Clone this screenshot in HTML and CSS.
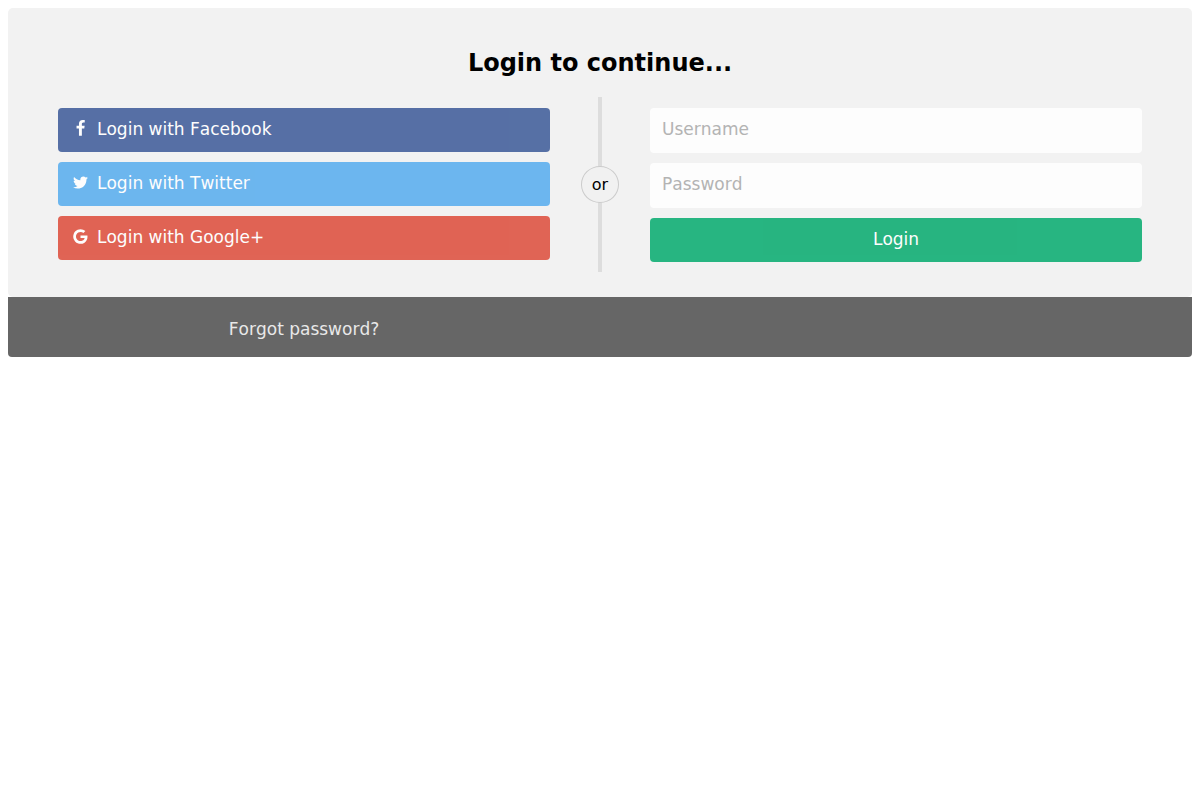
FILE: index.html
```html
<!DOCTYPE html>
<html lang="en">
<head>
<meta charset="utf-8">
<meta name="viewport" content="width=device-width, initial-scale=1">
<title>Login</title>
<link rel="stylesheet" href="styles.css">
</head>
<body>
<main class="card">
  <form class="login">
    <h2 class="title">Login to continue...</h2>
    <div class="row">
      <div class="col">
        <a href="#" class="btn facebook"><svg class="icon" viewBox="0 0 1792 1792" aria-hidden="true"><path d="M1343 12v264h-157q-86 0-116 36t-30 108v189h293l-39 296h-254v759h-306v-759h-255v-296h255v-218q0-186 104-288.500t277-102.500q147 0 228 12z"/></svg>Login with Facebook</a>
        <a href="#" class="btn twitter"><svg class="icon" viewBox="0 0 1792 1792" aria-hidden="true"><path d="M1684 408q-67 98-162 167 1 14 1 42 0 130-38 259.500t-115.500 248.500-184.500 210.500-258 146-323 54.500q-271 0-496-145 35 4 78 4 225 0 401-138-105-2-188-64.500t-114-159.500q33 5 61 5 43 0 85-11-112-23-185.500-111.500t-73.500-205.500v-4q68 38 146 41-66-44-105-115t-39-154q0-88 44-163 121 149 294.500 238.500t371.500 99.500q-8-38-8-74 0-134 94.500-228.500t228.500-94.500q140 0 236 102 109-21 205-78-37 115-142 178 93-10 186-50z"/></svg>Login with Twitter</a>
        <a href="#" class="btn google"><svg class="icon" viewBox="0 0 1792 1792" aria-hidden="true"><path d="M896 786h725q12 67 12 128 0 217-91 387.500t-259.500 266.500-386.500 96q-157 0-299-60.500t-245-163.500-163.500-245-60.500-299 60.500-299 163.500-245 245-163.500 299-60.500q300 0 515 201l-209 201q-123-119-306-119-129 0-238.500 65t-173.500 176.500-64 243.500 64 243.500 173.500 176.500 238.500 65q87 0 160-24t120-60 82-82 51.500-87 22.500-78h-436v-264z"/></svg>Login with Google+</a>
      </div>
      <div class="divider"><span class="or">or</span></div>
      <div class="col">
        <input class="field" type="text" name="username" placeholder="Username" aria-label="Username" required>
        <input class="field" type="password" name="password" placeholder="Password" aria-label="Password" required>
        <button class="btn submit" type="submit">Login</button>
      </div>
    </div>
  </form>
  <footer class="bottom">
    <a href="#" class="forgot">Forgot password?</a>
  </footer>
</main>
</body>
</html>
```
FILE: styles.css
```css
* {
  box-sizing: border-box;
}

body {
  margin: 8px;
  font-family: "DejaVu Sans", Verdana, sans-serif;
  font-size: 16px;
  font-kerning: none;
  background: #fff;
}

.login {
  padding: 41px 50px 25px;
  border-radius: 5px;
  background: #f2f2f2;
}

.title {
  margin: 0 0 20px;
  font-size: 24px;
  line-height: 28px;
  text-align: center;
}

.row {
  display: grid;
  grid-template-columns: 1fr 100px 1fr;
}

.col {
  display: flex;
  flex-direction: column;
  gap: 10px;
  padding: 11px 0 10px;
}

.btn,
.field {
  width: 100%;
  padding: 11px 12px 13px;
  border: none;
  border-radius: 4px;
  opacity: 0.85;
  font-family: inherit;
  font-size: 17px;
  font-kerning: inherit;
  line-height: 20px;
}

.btn {
  display: flex;
  align-items: center;
  gap: 6px;
  color: #fff;
  text-decoration: none;
  cursor: pointer;
}

.btn:hover,
.field:hover {
  opacity: 1;
}

.field {
  height: 45px;
  padding-bottom: 14px;
  background: #fff;
}

.field::placeholder {
  color: #a9a9a9;
}

.icon {
  width: 21px;
  height: 17px;
  margin-bottom: 1px;
  fill: currentColor;
}

.facebook {
  background: #3b5998;
}

.twitter {
  background: #55acee;
}

.google {
  background: #dd4b39;
}

.submit {
  justify-content: center;
  background: #04aa6d;
}

.divider {
  display: flex;
  align-items: center;
  justify-content: center;
  background: linear-gradient(#ddd, #ddd) center / 4px 100% no-repeat;
}

.or {
  padding: 8px 10px;
  border: 1px solid #ccc;
  border-radius: 50%;
  background: #f1f1f1;
  line-height: 19px;
}

.bottom {
  display: grid;
  grid-template-columns: 1fr 1fr;
  height: 60px;
  align-items: center;
  border-radius: 0 0 4px 4px;
  background: #666;
  text-align: center;
}

.forgot {
  padding-top: 4px;
  color: #fff;
  font-size: 17px;
  line-height: 20px;
  text-decoration: none;
  opacity: 0.85;
}
```
